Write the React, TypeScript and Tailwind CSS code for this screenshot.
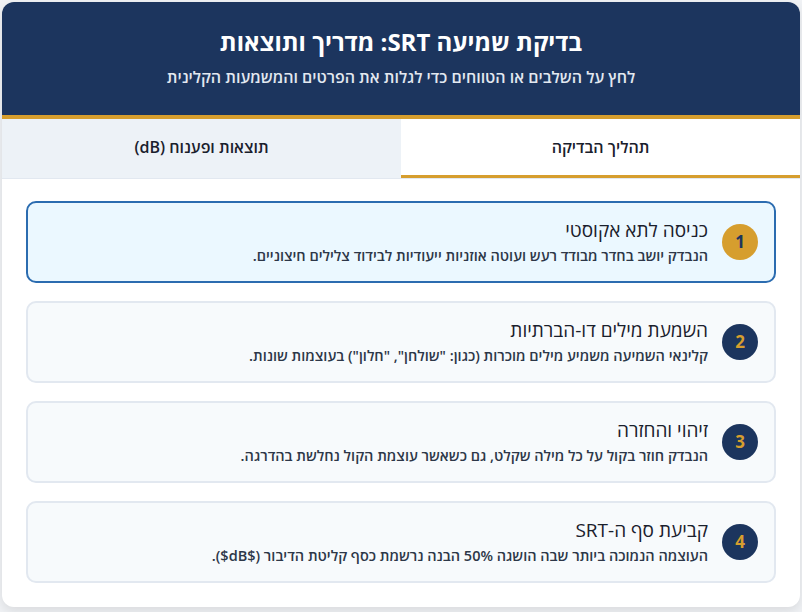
import { useState } from "react";

const steps = [
  {
    n: "1",
    title: "כניסה לתא אקוסטי",
    desc: "הנבדק יושב בחדר מבודד רעש ועוטה אוזניות ייעודיות לבידוד צלילים חיצוניים.",
  },
  {
    n: "2",
    title: "השמעת מילים דו-הברתיות",
    desc: 'קלינאי השמיעה משמיע מילים מוכרות (כגון: "שולחן", "חלון") בעוצמות שונות.',
  },
  {
    n: "3",
    title: "זיהוי והחזרה",
    desc: "הנבדק חוזר בקול על כל מילה שקלט, גם כשאשר עוצמת הקול נחלשת בהדרגה.",
  },
  {
    n: "4",
    title: "קביעת סף ה-SRT",
    desc: "העוצמה הנמוכה ביותר שבה הושגה 50% הבנה נרשמת כסף קליטת הדיבור ($dB$).",
  },
];

export default function App() {
  const [tab, setTab] = useState(0);
  const [active, setActive] = useState(0);

  return (
    <div
      dir="rtl"
      className="min-h-screen bg-[#f0f2f5] p-[2px]"
      style={{ fontFamily: "'Open Sans', 'Noto Sans', sans-serif" }}
    >
      <div className="overflow-hidden rounded-xl bg-white shadow-[0_4px_12px_rgba(0,0,0,0.1)]">
        <div className="border-b-4 border-[#d69e2e] bg-[#1c355e] px-6 pt-6 pb-[26px] text-center text-white">
          <h1 className="text-[24px] font-bold leading-8">בדיקת שמיעה SRT: מדריך ותוצאות</h1>
          <p className="mt-[7px] text-[16px] font-semibold leading-6 text-[#e2e8f0]">
            לחץ על השלבים או הטווחים כדי לגלות את הפרטים והמשמעות הקלינית
          </p>
        </div>

        <div className="flex border-b border-[#e2e8f0]">
          <button
            onClick={() => setTab(0)}
            className={`flex-1 h-[59px] text-[16px] font-semibold text-[#1a202c] border-b-[3px] ${
              tab === 0 ? "bg-white border-[#d69e2e]" : "bg-[#edf2f7] border-transparent"
            }`}
          >
            תהליך הבדיקה
          </button>
          <button
            onClick={() => setTab(1)}
            className={`flex-1 h-[59px] text-[16px] font-semibold text-[#1a202c] border-b-[3px] ${
              tab === 1 ? "bg-white border-[#d69e2e]" : "bg-[#edf2f7] border-transparent"
            }`}
          >
            תוצאות ופענוח (dB)
          </button>
        </div>

        <div className="flex flex-col gap-[18px] px-6 pt-[22px] pb-6">
          {steps.map((s, i) => {
            const on = active === i;
            return (
              <div
                key={s.n}
                onClick={() => setActive(i)}
                className={`flex h-[82px] cursor-pointer items-center gap-[14px] rounded-[10px] border-2 px-4 ${
                  on ? "border-[#2b6cb0] bg-[#ebf8ff]" : "border-[#e2e8f0] bg-[#f7fafc]"
                }`}
              >
                <div
                  className={`flex h-9 w-9 shrink-0 items-center justify-center rounded-full text-[17px] font-bold ${
                    on ? "bg-[#d69e2e] text-[#1c355e]" : "bg-[#1c355e] text-[#d69e2e]"
                  }`}
                >
                  {s.n}
                </div>
                <div>
                  <div className="text-[19px] leading-6 text-[#1a202c]">{s.title}</div>
                  <div className="mt-1 text-[14.5px] font-semibold leading-5 text-[#2d3748]">{s.desc}</div>
                </div>
              </div>
            );
          })}
        </div>
      </div>
    </div>
  );
}
